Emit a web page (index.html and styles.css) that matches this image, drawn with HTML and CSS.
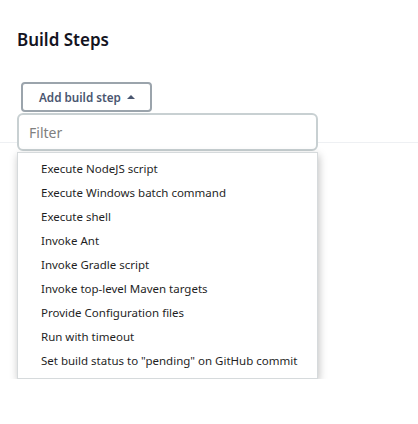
FILE: index.html
```html
<!DOCTYPE html>
<html>
<head>
<meta charset="utf-8">
<link rel="stylesheet" href="styles.css">
</head>
<body>
<div class="page">
  <h2 class="title">Build Steps</h2>
  <div class="step-area">
    <button class="add-btn">Add build step <span class="caret"></span></button>
    <div class="stack">
      <div class="divider"></div>
      <div class="menu">
        <input class="filter" type="text" placeholder="Filter">
        <ul class="list">
          <li>Execute NodeJS script</li>
          <li>Execute Windows batch command</li>
          <li>Execute shell</li>
          <li>Invoke Ant</li>
          <li>Invoke Gradle script</li>
          <li>Invoke top-level Maven targets</li>
          <li>Provide Configuration files</li>
          <li>Run with timeout</li>
          <li>Set build status to "pending" on GitHub commit</li>
        </ul>
      </div>
    </div>
  </div>
</div>
</body>
</html>
```
FILE: styles.css
```css
html, body {
  margin: 0;
  padding: 0;
  background: #fff;
}
body {
  font-family: "Noto Sans", "Open Sans", sans-serif;
  color: #1f1f1f;
}
.page {
  padding-left: 17px;
}
.title {
  margin: 0;
  padding-top: 27px;
  font-size: 17px;
  line-height: 26px;
  font-weight: 600;
  color: #14141f;
}
.step-area {
  margin-top: 29px;
}
.add-btn {
  display: flex;
  align-items: center;
  gap: 6px;
  margin-left: 4px;
  height: 30px;
  width: 131px;
  padding: 0 0 0 16px;
  border: 2px solid #9ba4ac;
  border-radius: 4px;
  background: #fff;
  font-family: inherit;
  font-size: 11.7px;
  font-weight: 600;
  color: #4a5670;
}
.caret {
  width: 0;
  height: 0;
  border-left: 4px solid transparent;
  border-right: 4px solid transparent;
  border-bottom: 4px solid #4a5670;
  margin-top: -1px;
}
.stack {
  display: grid;
  margin-top: 1px;
}
.stack > * {
  grid-area: 1 / 1;
}
.divider {
  align-self: start;
  margin-top: 29px;
  margin-left: -17px;
  height: 1px;
  background: #eef0f3;
}
.menu {
  position: relative;
  z-index: 1;
  width: 301px;
}
.filter {
  display: block;
  box-sizing: border-box;
  width: 301px;
  height: 38px;
  margin: 0;
  padding: 0 10px;
  border: 2px solid #c8d0d2;
  border-radius: 6px;
  font-family: inherit;
  font-size: 14px;
  color: #333;
  background: #fff;
  outline: none;
}
.filter::placeholder {
  color: #808080;
}
.list {
  list-style: none;
  margin: 1px 0 0;
  padding: 4px 0 5px;
  border: 1px solid #d6dadc;
  background: #fff;
  box-shadow: 1px 3px 8px rgba(0, 0, 0, 0.25);
}
.list li {
  height: 24px;
  line-height: 24px;
  padding-left: 23px;
  font-size: 11.5px;
  color: #1f1f1f;
  white-space: nowrap;
}
```
